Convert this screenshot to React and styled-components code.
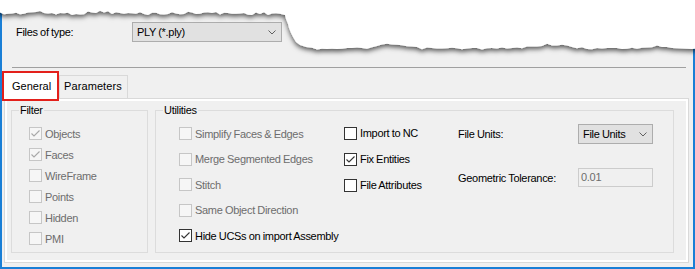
import React from 'react'
import styled, { createGlobalStyle } from 'styled-components'

const GlobalStyle = createGlobalStyle`
  html, body { margin: 0; padding: 0; background: #fff; }
  body {
    font-family: "Liberation Sans", Arial, sans-serif;
    font-size: 11px;
    letter-spacing: -0.3px;
    word-spacing: -0.4px;
    color: #000;
  }
`

const Page = styled.div`
  position: relative;
  width: 695px;
  height: 269px;
  overflow: hidden;
  background: #fff;
`
const Window = styled.div`
  height: 100%;
  box-sizing: border-box;
  background: #f0f0f0;
  border: 2px solid #1a7fd6;
  border-top: none;
  padding-top: 22px;
  padding-bottom: 4px;
  display: flex;
  flex-direction: column;
`
const FileRow = styled.div`
  display: flex;
  align-items: center;
  height: 20px;
  padding-left: 14px;
`
const FieldLabel = styled.span`
  width: 116px;
  line-height: 14px;
`
const Combo = styled.div`
  width: ${p => p.$w}px;
  height: 20px;
  box-sizing: border-box;
  background: #e1e1e1;
  border: 1px solid #adadad;
  display: flex;
  align-items: center;
  justify-content: space-between;
  padding: 0 5px 0 4px;
  line-height: 14px;
`
const Separator = styled.div`
  height: 1px;
  background: #a0a0a0;
  margin: 25px 7px 0 10px;
`
const TabStrip = styled.div`
  display: flex;
  align-items: flex-end;
  height: 27px;
  margin-top: 3px;
`
const Tab = styled.div`
  position: relative;
  box-sizing: border-box;
  line-height: 14px;
  ${p => p.$active ? `
    z-index: 2;
    width: 57px;
    height: 30px;
    margin-bottom: -3px;
    background: #fff;
    border: 2px solid #e3201b;
    padding: 6px 0 0 8px;
    letter-spacing: 0;
  ` : `
    width: 69px;
    height: 23px;
    background: #f0f0f0;
    border: 1px solid #d9d9d9;
    border-bottom: none;
    padding: 3px 0 0 4px;
    letter-spacing: 0.1px;
  `}
`
const TabPanel = styled.div`
  height: 165px;
  box-sizing: border-box;
  margin: 0 4px 0 2px;
  border: 1px solid #d9d9d9;
  box-shadow: inset 0 0 0 2px #fff;
  padding: 4px 0 0 6px;
  display: flex;
  gap: 7px;
`
const Group = styled.fieldset`
  margin: 0;
  padding: 0;
  width: ${p => p.$w}px;
  height: 150px;
  box-sizing: border-box;
  border: 1px solid #dcdcdc;
  min-width: 0;
`
const Legend = styled.legend`
  margin-left: 7px;
  padding: 0 1px;
  line-height: 14px;
`
const FilterList = styled.div`
  padding: 6px 0 0 17px;
`
const UtilBody = styled.div`
  display: flex;
  padding: 4px 0 0 23px;
`
const Column = styled.div`
  width: ${p => p.$w}px;
  margin-top: ${p => p.$top || 0}px;
`
const CheckRow = styled.div`
  display: flex;
  align-items: center;
  height: ${p => p.$h}px;
  color: ${p => p.$disabled ? '#6d6d6d' : '#000'};
  line-height: 14px;
  white-space: nowrap;
`
const Box = styled.span`
  width: 13px;
  height: 13px;
  box-sizing: border-box;
  flex: none;
  margin-right: 3px;
  border: 1px solid ${p => p.$disabled ? '#c6c6c6' : '#333'};
  background: ${p => p.$disabled ? '#f6f6f6' : '#fff'};
  display: flex;
  align-items: center;
  justify-content: center;
`
const SettingsGrid = styled.div`
  display: grid;
  grid-template-columns: 120px 75px;
  grid-template-rows: 20px 19px;
  row-gap: 24px;
  align-items: center;
  margin-top: 3px;
  line-height: 14px;
`
const TextInput = styled.div`
  height: 19px;
  box-sizing: border-box;
  border: 1px solid #cccccc;
  background: #f0f0f0;
  color: #6d6d6d;
  padding: 1px 0 0 2px;
  line-height: 14px;
`
const TornSvg = styled.svg`
  position: absolute;
  top: 0;
  left: 0;
  pointer-events: none;
`

const Chevron = () => (
  <svg width="8" height="5" viewBox="0 0 8 5">
    <polyline points="0.5,0.5 4,4 7.5,0.5" fill="none" stroke="#606060" strokeWidth="1" />
  </svg>
)

const Check = ({ disabled }) => (
  <svg width="11" height="11" viewBox="0 0 11 11">
    <polyline points="1.5,5.5 4,8 9.5,2.5" fill="none" stroke={disabled ? '#a8a8a8' : '#333'} strokeWidth="1.1" />
  </svg>
)

function CheckBox({ label, checked, disabled, h }) {
  return (
    <CheckRow $h={h} $disabled={disabled}>
      <Box $disabled={disabled}>{checked && <Check disabled={disabled} />}</Box>
      {label}
    </CheckRow>
  )
}

// deterministic jitter for the torn paper edge
const rnd = i => {
  const v = Math.sin(i * 12.9898 + 78.233) * 43758.5453
  return v - Math.floor(v)
}
const bump = (x, c, w, d) => d * Math.exp(-((x - c) * (x - c)) / (w * w))

function tornPath() {
  const pts = [[-10, -10], [-10, 13]]
  let i = 0
  for (let x = 0; x <= 282; x += 4, i++) {
    const y = 13.5 + (rnd(i) - 0.5) * 3 - bump(x, 35, 10, 1.5) - bump(x, 100, 12, 2) - bump(x, 200, 15, 1)
    pts.push([x, y])
  }
  pts.push([285, 15], [286, 19], [288, 24], [289, 28], [291, 33], [293, 37], [296, 42], [300, 45], [306, 47])
  for (let x = 312; x <= 700; x += 5, i++) {
    const y = 48.5 + (rnd(i + 50) - 0.5) * 2 - bump(x, 392, 18, 4) - bump(x, 550, 22, 4) - bump(x, 660, 18, 2)
    pts.push([x, y])
  }
  pts.push([705, 48], [705, -10])
  return 'M' + pts.map(p => p[0] + ',' + p[1].toFixed(1)).join(' L') + ' Z'
}

const filterItems = [
  { label: 'Objects', checked: true },
  { label: 'Faces', checked: true },
  { label: 'WireFrame' },
  { label: 'Points' },
  { label: 'Hidden' },
  { label: 'PMI' },
]

const utilFirst = [
  { label: 'Simplify Faces & Edges', disabled: true },
  { label: 'Merge Segmented Edges', disabled: true },
  { label: 'Stitch', disabled: true },
  { label: 'Same Object Direction', disabled: true },
  { label: 'Hide UCSs on import Assembly', checked: true },
]

const utilSecond = [
  { label: 'Import to NC' },
  { label: 'Fix Entities', checked: true },
  { label: 'File Attributes' },
]

export default function App() {
  return (
    <Page>
      <GlobalStyle />
      <Window>
        <FileRow>
          <FieldLabel>Files of type:</FieldLabel>
          <Combo $w={150}>
            <span>PLY (*.ply)</span>
            <Chevron />
          </Combo>
        </FileRow>
        <Separator />
        <TabStrip>
          <Tab $active>General</Tab>
          <Tab>Parameters</Tab>
        </TabStrip>
        <TabPanel>
          <Group $w={137}>
            <Legend>Filter</Legend>
            <FilterList>
              {filterItems.map(it => (
                <CheckBox key={it.label} h={21} disabled label={it.label} checked={it.checked} />
              ))}
            </FilterList>
          </Group>
          <Group $w={519}>
            <Legend>Utilities</Legend>
            <UtilBody>
              <Column $w={165}>
                {utilFirst.map(it => (
                  <CheckBox key={it.label} h={25.5} {...it} />
                ))}
              </Column>
              <Column $w={114} $top={-1}>
                {utilSecond.map(it => (
                  <CheckBox key={it.label} h={26} {...it} />
                ))}
              </Column>
              <SettingsGrid>
                <span>File Units:</span>
                <Combo $w={75}>
                  <span>File Units</span>
                  <Chevron />
                </Combo>
                <span>Geometric Tolerance:</span>
                <TextInput>0.01</TextInput>
              </SettingsGrid>
            </UtilBody>
          </Group>
        </TabPanel>
      </Window>
      <TornSvg width="695" height="70" viewBox="0 0 695 70">
        <defs>
          <filter id="paperShadow" filterUnits="userSpaceOnUse" x="-20" y="-20" width="740" height="110">
            <feDropShadow dx="0" dy="2.5" stdDeviation="2.6" floodColor="#000" floodOpacity="0.65" />
          </filter>
        </defs>
        <path d={tornPath()} fill="#fff" filter="url(#paperShadow)" />
      </TornSvg>
    </Page>
  )
}
